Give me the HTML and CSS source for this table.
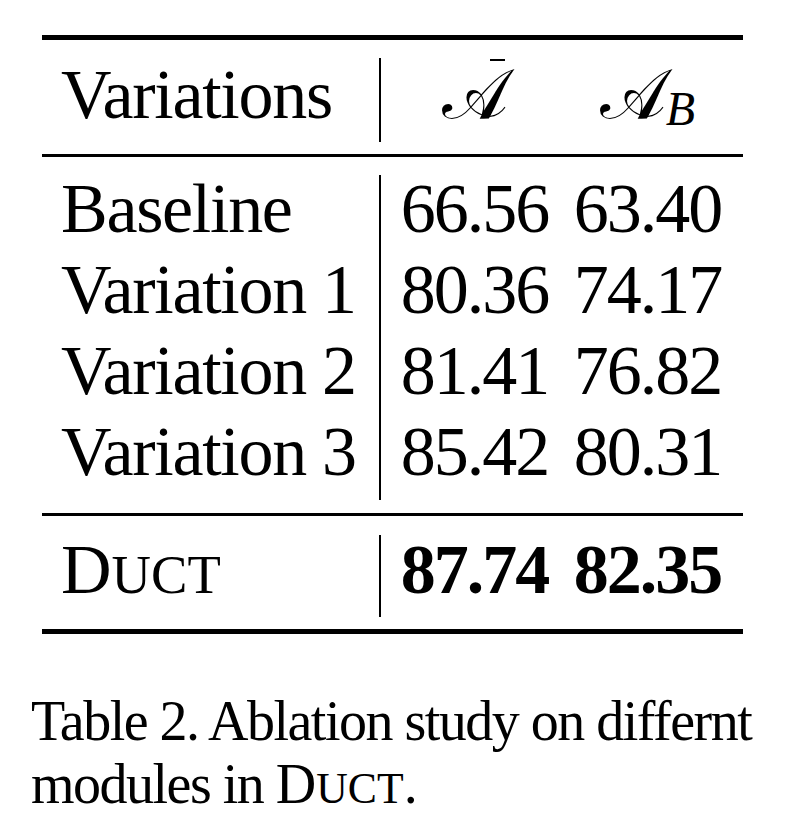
FILE: index.html
```html
<!DOCTYPE html>
<html lang="en">
  <head>
    <meta charset="utf-8" />
    <title>Table 2 - Ablation study</title>
    <link rel="stylesheet" href="styles.css">
  </head>

  <body>
    <div class="figure">
      <div class="table">
        <!-- header -->
        <div class="section head">
          <div class="label">Variations</div>
          <div class="vbar"></div>
          <div class="num"><span class="cal accent">𝒜</span></div>
          <div class="num"><span class="cal">𝒜</span><span class="sub">B</span></div>
        </div>

        <!-- variations -->
        <div class="section body">
          <div class="vbar"></div>
          <div class="label">Baseline</div>
          <div class="num">66.56</div>
          <div class="num">63.40</div>
          <div class="label">Variation 1</div>
          <div class="num">80.36</div>
          <div class="num">74.17</div>
          <div class="label">Variation 2</div>
          <div class="num">81.41</div>
          <div class="num">76.82</div>
          <div class="label">Variation 3</div>
          <div class="num">85.42</div>
          <div class="num">80.31</div>
        </div>

        <!-- ours -->
        <div class="section foot">
          <div class="vbar"></div>
          <div class="label"><span class="sc">D<span class="sc-low">uct</span></span></div>
          <div class="num best">87.74</div>
          <div class="num best">82.35</div>
        </div>
      </div>

      <p class="caption">Table 2. Ablation study on differnt modules in <span class="sc">D<span class="sc-low">uct</span></span>.</p>
    </div>
  </body>
</html>
```

FILE: styles.css
```css
body, html {
  margin: 0;
  padding: 0;
  background: #fff;
  color: #000;
}
.figure {
  padding-top: 35px;
  font-family: "Liberation Serif", "Times New Roman", serif;
}
.table {
  width: 701px;
  margin-left: 42px;
  border-top: 5px solid #000;
  border-bottom: 5px solid #000;
}
.section {
  display: grid;
  grid-template-columns: 337px 2px 187px 159px;
  font-size: 70px;
}
.head {
  grid-template-rows: 84px;
  padding: 18px 0 12px;
}
.head .label, .head .num {
  line-height: 73px;
}
.body {
  grid-template-rows: repeat(4, 81px);
  border-top: 3px solid #000;
  padding: 11px 0 21px;
  line-height: 81px;
}
.body .vbar {
  margin: 7px 0 -8px;
}
.foot {
  grid-template-rows: 82px;
  border-top: 3px solid #000;
  padding: 19px 0 12px;
}
.foot .label, .foot .num {
  line-height: 69px;
}
.vbar {
  grid-column: 2;
  grid-row: 1 / -1;
  background: #000;
}
.label {
  padding-left: 19px;
  white-space: nowrap;
  letter-spacing: -1.3px;
}
.num {
  text-align: center;
  white-space: nowrap;
  letter-spacing: -2px;
}
.best {
  font-weight: bold;
}
.sc {
  letter-spacing: 0;
}
.sc-low {
  font-size: 0.78em;
  text-transform: uppercase;
}
.cal {
  font-family: "DejaVu Serif", "DejaVu Sans", serif;
  font-style: normal;
  letter-spacing: 0;
}
.accent {
  position: relative;
  display: inline-block;
}
.accent::after {
  content: "";
  position: absolute;
  right: 3px;
  top: 1px;
  width: 15px;
  height: 2px;
  background: #000;
}
.sub {
  font-style: italic;
  font-size: 48px;
  line-height: 0;
  vertical-align: -7px;
  letter-spacing: 0;
}
.caption {
  margin: 56px 0 0;
  padding-left: 31px;
  width: 740px;
  font-size: 56px;
  line-height: 63px;
  letter-spacing: -1.5px;
}
```
